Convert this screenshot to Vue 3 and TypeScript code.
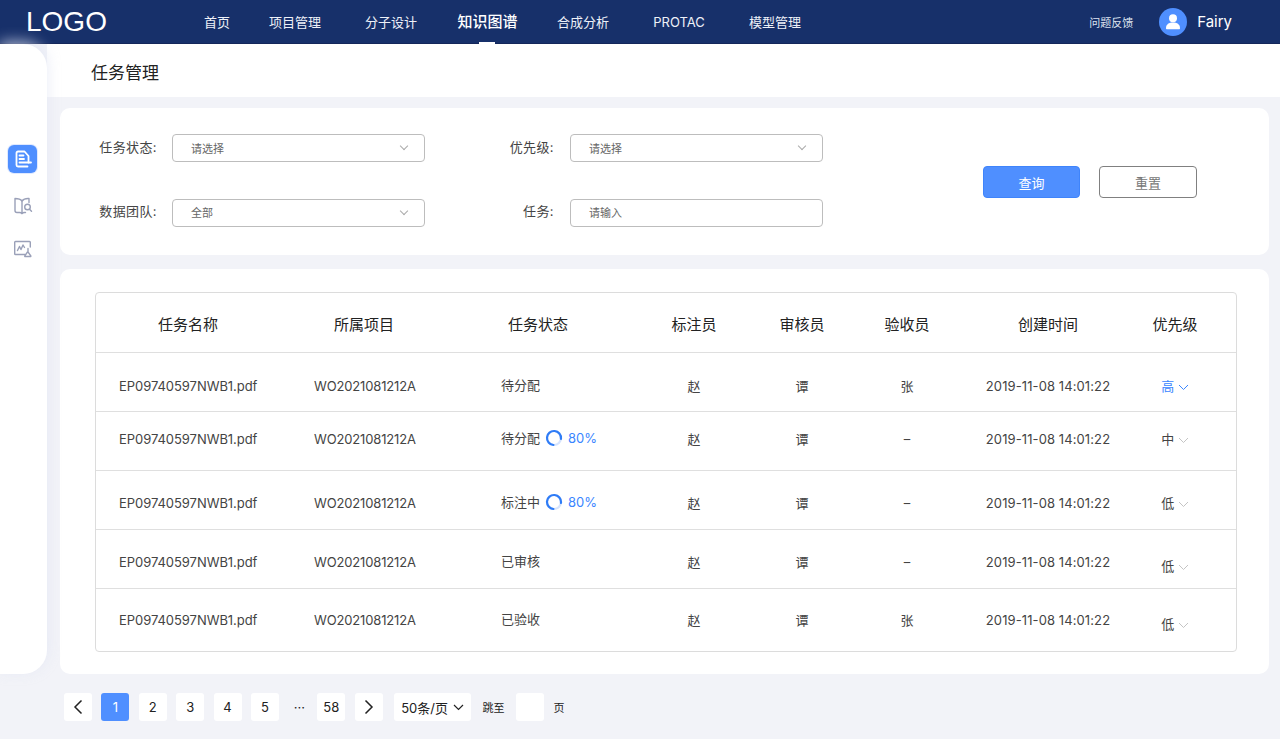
<script setup lang="ts">
interface TaskRow {
  status: string
  progress?: string
  checker: string
  priority: string
}

const navItems = ['首页', '项目管理', '分子设计', '知识图谱', '合成分析', 'PROTAC', '模型管理']
const columns = ['任务名称', '所属项目', '任务状态', '标注员', '审核员', '验收员', '创建时间', '优先级']

const rows: TaskRow[] = [
  { status: '待分配', checker: '张', priority: '高' },
  { status: '待分配', progress: '80%', checker: '–', priority: '中' },
  { status: '标注中', progress: '80%', checker: '–', priority: '低' },
  { status: '已审核', checker: '–', priority: '低' },
  { status: '已验收', checker: '张', priority: '低' },
]

const pages = ['1', '2', '3', '4', '5']
</script>

<template>
  <div class="page">
    <header class="topbar">
      <div class="logo">LOGO</div>
      <nav class="nav">
        <a v-for="(item, index) in navItems" :key="item" class="nav-item" :class="{ first: index === 0, active: item === '知识图谱' }">{{ item }}</a>
      </nav>
      <div class="user">
        <span class="feedback">问题反馈</span>
        <span class="avatar">
          <svg width="28" height="28" viewBox="0 0 28 28">
            <circle cx="14" cy="10.2" r="4" fill="#fff" />
            <path d="M7 20.2c0-4 3-5.7 7-5.7s7 1.700 7 5.700c0 .6-.4 1-1 1H8c-.6 0-1-.4-1-1z" fill="#fff" />
          </svg>
        </span>
        <span class="user-name">Fairy</span>
      </div>
    </header>

    <div class="body">
      <aside class="sidebar">
        <span class="side-btn active">
          <svg width="20" height="20" viewBox="0 0 20 20" fill="none" stroke="#fff" stroke-width="1.800" stroke-linecap="round" stroke-linejoin="round">
            <path d="M15.500 13.500V7L11.500 2.500H5C4.200 2.500 3.500 3.200 3.500 4v12c0 .8.700 1.500 1.500 1.500H14.500" />
            <path d="M6.500 6.500h4M6.500 10h4.500M6.500 13.500h11.500" />
          </svg>
        </span>
        <span class="side-btn">
          <svg width="20" height="20" viewBox="0 0 20 20" fill="none" stroke="#9aa0b8" stroke-width="1.400" stroke-linecap="round" stroke-linejoin="round">
            <path d="M9 5C7.500 3 4.500 2.500 2 2.500v12c0 1.500 1 2 2 2h2.500c1.200 0 2 .3 2.500 1 .6-.7 1.300-1 2.500-1h1" />
            <path d="M9 5v12.500M9 5c1.200-1.600 3-2.500 6-2.500h1v4" />
            <circle cx="14.500" cy="11" r="2.800" />
            <path d="M16.500 13.200l2 2" />
          </svg>
        </span>
        <span class="side-btn">
          <svg width="20" height="20" viewBox="0 0 20 20" fill="none" stroke="#9aa0b8" stroke-width="1.400" stroke-linecap="round" stroke-linejoin="round">
            <path d="M12 15.500H2.500c-.5 0-.8-.3-.8-.8V3.300c0-.5.300-.8.800-.8h14c.5 0 .8.300.8.800V8" />
            <path d="M4.500 11.500l2-4 1.500 3 2-4.500 1.500 2.500" />
            <path d="M15 9.500v3.500l2.800 3.800c.2.400 0 .7-.4.7h-5.200c-.4 0-.6-.3-.4-.7L14.500 13" />
          </svg>
        </span>
      </aside>

      <main class="content">
        <div class="title-bar">任务管理</div>

        <section class="card filter-card">
          <div class="filter-grid">
            <div class="field">
              <label>任务状态:</label>
              <div class="control">请选择<i class="caret"></i></div>
            </div>
            <div class="field">
              <label>优先级:</label>
              <div class="control">请选择<i class="caret"></i></div>
            </div>
            <div class="field">
              <label>数据团队:</label>
              <div class="control">全部<i class="caret"></i></div>
            </div>
            <div class="field">
              <label>任务:</label>
              <div class="control">请输入</div>
            </div>
          </div>
          <div class="filter-actions">
            <button class="btn primary">查询</button>
            <button class="btn">重置</button>
          </div>
        </section>

        <section class="card table-card">
          <div class="table">
            <div class="tr head">
              <div v-for="col in columns" :key="col" class="th">{{ col }}</div>
            </div>
            <div v-for="(row, index) in rows" :key="index" class="tr">
              <div class="td name">EP09740597NWB1.pdf</div>
              <div class="td project">WO2021081212A</div>
              <div class="td status">
                <span>{{ row.status }}</span>
                <template v-if="row.progress">
                  <svg class="ring" width="18" height="18" viewBox="0 0 18 18" fill="none" stroke-width="2.200">
                    <circle cx="9" cy="9" r="7" stroke="#d5e3fd" />
                    <circle cx="9" cy="9" r="7" stroke="#2f7cf6" stroke-dasharray="33 44" transform="rotate(95 9 9)" stroke-linecap="round" />
                  </svg>
                  <span class="percent">{{ row.progress }}</span>
                </template>
              </div>
              <div class="td center">赵</div>
              <div class="td center">谭</div>
              <div class="td center">{{ row.checker }}</div>
              <div class="td center date">2019-11-08 14:01:22</div>
              <div class="td center priority" :class="{ high: row.priority === '高' }">
                {{ row.priority }}
                <svg width="11" height="7" viewBox="0 0 11 7" fill="none" stroke="currentColor" stroke-width="1">
                  <path d="M1 1l4.500 4.500L10 1" />
                </svg>
              </div>
            </div>
          </div>
        </section>

        <div class="pager">
          <span class="pg">
            <svg width="10" height="16" viewBox="0 0 10 16" fill="none" stroke="#222" stroke-width="1.500"><path d="M8.500 1.500L2 8l6.500 6.500" /></svg>
          </span>
          <span v-for="p in pages" :key="p" class="pg" :class="{ current: p === '1' }">{{ p }}</span>
          <span class="dots">···</span>
          <span class="pg">58</span>
          <span class="pg">
            <svg width="10" height="16" viewBox="0 0 10 16" fill="none" stroke="#222" stroke-width="1.500"><path d="M1.500 1.500L8 8l-6.500 6.500" /></svg>
          </span>
          <span class="pg size">50条/页
            <svg width="11" height="7" viewBox="0 0 11 7" fill="none" stroke="#222" stroke-width="1.200"><path d="M1 1l4.500 4.500L10 1" /></svg>
          </span>
          <span class="jump">跳至</span>
          <span class="pg jump-box"></span>
          <span class="jump">页</span>
        </div>
      </main>
    </div>
  </div>
</template>

<style>
html,
body {
  margin: 0;
  background: #f2f3f8;
}
</style>

<style scoped>
.page {
  width: 1280px;
  height: 739px;
  overflow: hidden;
  background: #f2f3f8;
  color: #333;
  font-family: Inter, "Noto Sans CJK SC", "Liberation Sans", sans-serif;
  font-size: 13px;
}

.topbar {
  height: 43px;
  border-bottom: 1px solid #14275a;
  background: #17306a;
  color: #fff;
  display: flex;
  align-items: center;
}

.logo {
  width: 187px;
  padding-left: 26px;
  box-sizing: border-box;
  font-family: "Liberation Sans", sans-serif;
  font-size: 28px;
  line-height: 44px;
  font-weight: 400;
}

.nav {
  display: flex;
  height: 100%;
}

.nav-item {
  position: relative;
  width: 96px;
  line-height: 44px;
  text-align: center;
  color: #eef1f8;
}

.nav-item.first {
  width: 60px;
}

.nav-item.active {
  color: #fff;
  font-size: 15px;
  font-weight: 500;
  padding-left: 1px;
  width: 95px;
}

.nav-item.active::after {
  content: "";
  position: absolute;
  left: 40px;
  bottom: -1px;
  width: 16px;
  height: 2px;
  background: #fff;
}

.user {
  margin-left: auto;
  padding-right: 48px;
  display: flex;
  align-items: center;
}

.feedback {
  font-size: 11px;
  color: #dfe4f0;
  margin-right: 26px;
}

.avatar {
  width: 28px;
  height: 28px;
  border-radius: 50%;
  background: #4f8fff;
  margin-right: 10px;
}

.user-name {
  font-size: 15px;
  line-height: 46px;
}

.body {
  display: flex;
  height: 695px;
}

.sidebar {
  width: 47px;
  height: 630px;
  flex-shrink: 0;
  box-sizing: border-box;
  padding-top: 101px;
  background: #fff;
  border-radius: 0 24px 24px 0;
  box-shadow: 0 -3px 14px rgba(222, 226, 242, 0.7);
  display: flex;
  flex-direction: column;
  align-items: center;
  position: relative;
  z-index: 1;
}

.side-btn {
  width: 29px;
  height: 28px;
  margin: 0 0 15px -2px;
  display: flex;
  align-items: center;
  justify-content: center;
}

.side-btn.active {
  background: #4f8fff;
  border-radius: 6px;
  box-shadow: 0 0 0 1px #dfe9ff;
  margin-bottom: 19px;
}

.content {
  flex: 1;
  min-width: 0;
}

.title-bar {
  height: 53px;
  line-height: 58px;
  padding-left: 44px;
  background: #fff;
  font-size: 17px;
  color: #222;
}

.card {
  background: #fff;
  border-radius: 10px;
  margin: 0 11px 0 13px;
}

.filter-card {
  height: 147px;
  margin-top: 11px;
  display: flex;
}

.filter-grid {
  display: grid;
  grid-template-columns: 365px 365px;
  column-gap: 33px;
  row-gap: 37px;
  padding-top: 26px;
  align-content: start;
}

.field {
  display: flex;
  align-items: center;
  height: 28px;
}

.field label {
  width: 98px;
  margin-right: 14px;
  padding-right: 1px;
  box-sizing: border-box;
  text-align: right;
  letter-spacing: 0.4px;
  line-height: 24px;
  height: 26px;
  color: #444;
}

.field:nth-child(n + 3) label {
  line-height: 22px;
}

.field:nth-child(even) label {
  padding-right: 2px;
}

.control {
  position: relative;
  width: 253px;
  height: 28px;
  box-sizing: border-box;
  border: 1px solid #bdbdbd;
  border-radius: 4px;
  padding-left: 18px;
  line-height: 28px;
  font-size: 11px;
  color: #666;
}

.field:nth-child(n + 3) .control {
  line-height: 26px;
}

.caret {
  position: absolute;
  right: 17px;
  top: 8px;
  width: 5px;
  height: 5px;
  border-right: 1px solid #aaa;
  border-bottom: 1px solid #aaa;
  transform: rotate(45deg);
}

.filter-actions {
  margin-left: 160px;
  padding-top: 58px;
  display: flex;
  gap: 19px;
}

.btn {
  width: 98px;
  height: 32px;
  box-sizing: border-box;
  border: 1px solid #808080;
  border-radius: 4px;
  background: #fff;
  color: #777;
  font: inherit;
  padding: 0;
}

.btn.primary {
  width: 97px;
  border-color: #3f84fb;
  background: #4f8fff;
  color: #fff;
}

.table-card {
  height: 405px;
  box-sizing: border-box;
  margin-top: 14px;
  padding: 23px 32px 0 35px;
}

.table {
  border: 1px solid #dcdcdc;
  border-radius: 4px;
  height: 360px;
  box-sizing: border-box;
}

.tr {
  display: grid;
  grid-template-columns: 184px 168px 180px 132px 84px 126px 156px 110px;
  height: 59px;
  box-sizing: border-box;
  border-bottom: 1px solid #dfdfdf;
  color: #444;
}

.tr:last-child {
  height: 62px;
  border-bottom: none;
}

.tr.head {
  height: 60px;
  align-items: center;
}

.th {
  text-align: center;
  font-size: 15px;
  line-height: 20px;
  padding-top: 4px;
  color: #222;
}

.th:last-child,
.priority {
  padding-right: 12px;
}

.td {
  line-height: 20px;
  height: 20px;
  white-space: nowrap;
}

.date {
  letter-spacing: 0.1px;
}

.tr:nth-child(2) .td {
  margin-top: 23px;
}

.tr:nth-child(3) .td {
  margin-top: 17px;
}

.tr:nth-child(4) .td,
.tr:nth-child(5) .td {
  margin-top: 22px;
}

.tr:nth-child(6) .td {
  margin-top: 21px;
}

.tr:nth-child(5) .priority,
.tr:nth-child(6) .priority {
  position: relative;
  top: 4px;
}

.name {
  padding-left: 23px;
  letter-spacing: -0.05px;
}

.project {
  padding-left: 34px;
  letter-spacing: -0.15px;
}

.status {
  padding-left: 53px;
  display: flex;
  align-items: center;
  position: relative;
  top: -1px;
}

.ring {
  margin-left: 5px;
}

.percent {
  margin-left: 5px;
  color: #3a86ff;
}

.center {
  text-align: center;
}

.priority {
  color: #444;
}

.priority svg {
  color: #c4c4c4;
}

.priority.high {
  color: #3a86ff;
}

.priority.high svg {
  color: #3a86ff;
}

.pager {
  margin: 19px 0 0 17px;
  display: flex;
  align-items: center;
  color: #222;
}

.pg {
  width: 28px;
  height: 28px;
  margin-right: 9.400px;
  background: #fff;
  border-radius: 3px;
  display: flex;
  align-items: center;
  justify-content: center;
  flex-shrink: 0;
}

.pg.current {
  background: #4f8fff;
  color: #fff;
}

.dots {
  width: 28px;
  margin-left: -3px;
  margin-right: 4px;
  text-align: center;
}

.pg.size {
  width: 77px;
  margin-left: 2px;
  gap: 5px;
}

.jump {
  font-size: 11px;
  margin: 0 11px 0 2px;
}

.jump-box {
  margin: 0 8px 0 0;
}
</style>
